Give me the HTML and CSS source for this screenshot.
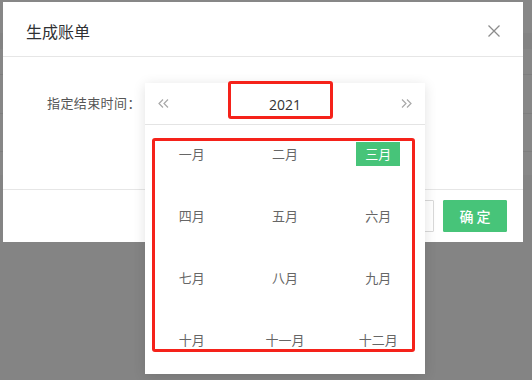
FILE: index.html
```html
<!DOCTYPE html>
<html lang="zh-CN">
<head>
<meta charset="utf-8">
<link rel="stylesheet" href="styles.css">
</head>
<body>
<div class="backdrop">
  <div class="band b1"></div>
  <div class="band b2"></div>
  <div class="band b3"></div>
  <div class="band b4"></div>
  <div class="band b5"></div>
</div>
<div class="dialog">
  <div class="dialog-header">
    <span class="dialog-title">生成账单</span>
    <svg class="close" width="12" height="12" viewBox="0 0 12 12"><path d="M0.5 0.5 L11.5 11.5 M11.5 0.5 L0.5 11.5" stroke="#8c8c8c" stroke-width="1.3" fill="none"/></svg>
  </div>
  <div class="dialog-body">
    <div class="form-item">
      <label class="form-label">指定结束时间：</label>
      <div class="input"></div>
    </div>
  </div>
  <div class="dialog-footer">
    <button class="btn btn-cancel"></button>
    <button class="btn btn-primary">确 定</button>
  </div>
</div>

<div class="picker">
  <div class="picker-header">
    <svg class="arrow" width="11" height="9" viewBox="0 0 11 9"><path d="M5 0.5 L1 4.5 L5 8.5 M10 0.5 L6 4.5 L10 8.5" stroke="#a8a8a8" stroke-width="1.2" fill="none"/></svg>
    <span class="year">2021</span>
    <svg class="arrow" width="11" height="9" viewBox="0 0 11 9"><path d="M1 0.5 L5 4.5 L1 8.5 M6 0.5 L10 4.5 L6 8.5" stroke="#a8a8a8" stroke-width="1.2" fill="none"/></svg>
  </div>
  <div class="months">
    <div class="cell"><span>一月</span></div>
    <div class="cell"><span>二月</span></div>
    <div class="cell"><span class="current">三月</span></div>
    <div class="cell"><span>四月</span></div>
    <div class="cell"><span>五月</span></div>
    <div class="cell"><span>六月</span></div>
    <div class="cell"><span>七月</span></div>
    <div class="cell"><span>八月</span></div>
    <div class="cell"><span>九月</span></div>
    <div class="cell"><span>十月</span></div>
    <div class="cell"><span>十一月</span></div>
    <div class="cell"><span>十二月</span></div>
  </div>
  <div class="mark mark-year"></div>
  <div class="mark mark-grid"></div>
</div>
</body>
</html>
```

FILE: styles.css
```css
* { box-sizing: border-box; }
html, body { margin: 0; padding: 0; }
body {
  width: 532px;
  height: 380px;
  overflow: hidden;
  background: #878787;
  font-family: "Noto Sans CJK SC", "Noto Sans", sans-serif;
  padding: 2px 0 0 3px;
  position: relative;
}
.backdrop {
  position: absolute;
  left: 0; top: 0; right: 0; bottom: 0;
}
.band { position: absolute; left: 0; right: 0; height: 1px; background: #7e7e7e; }
.b1 { top: 33px; height: 16px; background: #838383; }
.b2 { top: 74px; }
.b3 { top: 113px; }
.b4 { top: 151px; }
.b5 { top: 175px; bottom: 0; height: auto; background: #848484; }

.dialog {
  position: relative;
  width: 520px;
  background: #fff;
}
.dialog-header {
  height: 55px;
  padding: 17px 23px 0 23px;
  border-bottom: 1px solid #e6e6e6;
  display: flex;
  justify-content: space-between;
  align-items: flex-start;
}
.dialog-title {
  font-size: 16px;
  line-height: 24px;
  color: #303133;
}
.close { margin-top: 6px; }
.dialog-body {
  height: 133px;
  padding-top: 30px;
  border-bottom: 1px solid #e6e6e6;
}
.form-item { display: flex; align-items: center; height: 32px; }
.form-label {
  padding-left: 44px;
  font-size: 13px;
  letter-spacing: 0.4px;
  color: #555;
  line-height: 32px;
}
.input { flex: 1; }
.dialog-footer {
  height: 52px;
  padding: 10px 16px 10px 0;
  display: flex;
  justify-content: flex-end;
  gap: 9px;
}
.btn {
  width: 64px;
  height: 32px;
  font-family: "Noto Sans CJK SC", sans-serif;
  font-size: 14px;
  border-radius: 1px;
  padding: 0;
}
.btn-cancel { background: #fff; border: 1px solid #d9d9d9; color: #606266; }
.btn-primary { background: #47c479; border: 1px solid #47c479; color: #fff; font-weight: 500; }

.picker {
  position: absolute;
  left: 145px;
  top: 83px;
  width: 280px;
  height: 291px;
  background: #fff;
  box-shadow: 0 2px 12px rgba(0,0,0,0.12);
}
.picker-header {
  height: 42px;
  padding: 0 13px;
  display: flex;
  align-items: center;
  justify-content: space-between;
  border-bottom: 1px solid #e4e4e4;
}
.year {
  font-family: "Open Sans", "Noto Sans", sans-serif;
  font-size: 14px;
  font-weight: 500;
  color: #333;
  margin-top: 2px;
}
.months {
  display: grid;
  grid-template-columns: repeat(3, 1fr);
  grid-auto-rows: 62px;
}
.cell {
  display: flex;
  align-items: center;
  justify-content: center;
  padding-bottom: 5px;
}
.cell span {
  font-size: 13px;
  color: #666;
  line-height: 24px;
  padding: 0 8px;
}
.cell span.current {
  background: #47c479;
  color: #fff;
  width: 44px;
  text-align: center;
  padding: 0;
}
.mark {
  position: absolute;
  border: 3px solid #f5221a;
  border-radius: 3px;
}
.mark-year { left: 83px; top: -2px; width: 105px; height: 38px; }
.mark-grid { left: 7px; top: 55px; width: 263px; height: 214px; }
```
